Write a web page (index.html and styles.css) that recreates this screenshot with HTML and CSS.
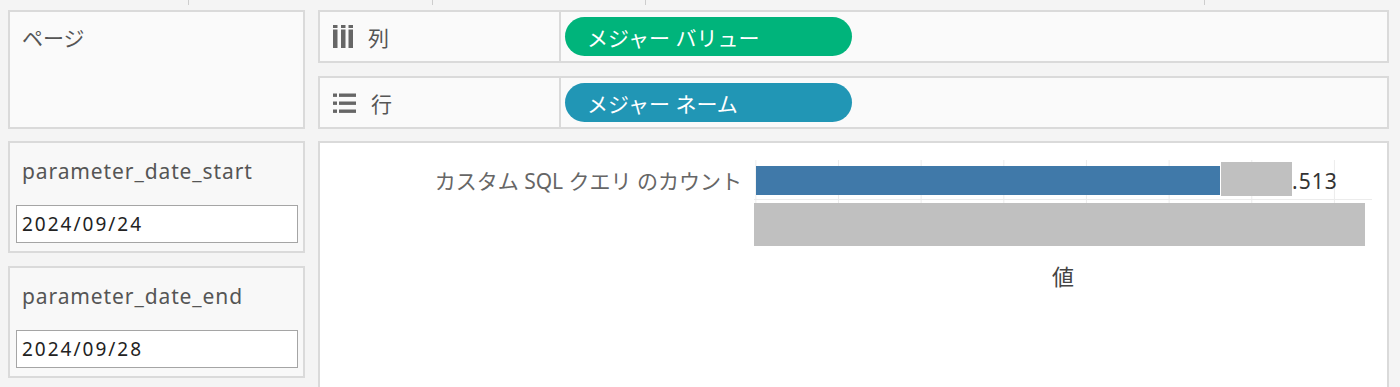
FILE: index.html
```html
<!DOCTYPE html>
<html lang="ja">
<head>
    <meta charset="UTF-8">
    <meta name="viewport" content="width=device-width, initial-scale=1.0">
    <title>シート</title>
    <link rel="stylesheet" href="styles.css">
</head>
<body>

<div class="ruler">
    <span></span><span></span><span></span><span></span>
</div>

<div class="workspace">
    <div class="card pages-card">ページ</div>

    <div class="shelves">
        <div class="card shelf">
            <div class="shelf-label">
                <svg class="shelf-icon" width="20" height="23" viewBox="0 0 20 23">
                    <rect x="0" y="0" width="4.5" height="3" />
                    <rect x="8" y="0" width="4.5" height="3" />
                    <rect x="15.5" y="0" width="4.5" height="3" />
                    <rect x="0" y="4.5" width="4.5" height="18.5" />
                    <rect x="8" y="4.5" width="4.5" height="18.5" />
                    <rect x="15.5" y="4.5" width="4.5" height="18.5" />
                </svg>
                <span>列</span>
            </div>
            <div class="pill pill-measure">メジャー バリュー</div>
        </div>
        <div class="card shelf">
            <div class="shelf-label">
                <svg class="shelf-icon" width="23" height="20" viewBox="0 0 23 20">
                    <rect x="0" y="0.5" width="4" height="3.4" />
                    <rect x="6" y="0.5" width="17" height="3.4" />
                    <rect x="0" y="8.5" width="4" height="3.4" />
                    <rect x="6" y="8.5" width="17" height="3.4" />
                    <rect x="0" y="16.5" width="4" height="3.4" />
                    <rect x="6" y="16.5" width="17" height="3.4" />
                </svg>
                <span>行</span>
            </div>
            <div class="pill pill-dimension">メジャー ネーム</div>
        </div>
    </div>

    <div class="params">
        <div class="card param">
            <div class="param-title">parameter_date_start</div>
            <input type="text" class="param-input" value="2024/09/24">
        </div>
        <div class="card param">
            <div class="param-title">parameter_date_end</div>
            <input type="text" class="param-input" value="2024/09/28">
        </div>
    </div>

    <div class="viz">
        <div class="row-header">カスタム SQL クエリ のカウント</div>
        <div class="pane">
            <div class="mark-row">
                <div class="bar bar-count"></div>
                <div class="bar label-mask"></div>
                <div class="bar-value">.513</div>
            </div>
            <div class="mark-row mark-row-last">
                <div class="bar bar-total"></div>
            </div>
        </div>
        <div class="axis-title">値</div>
    </div>
</div>

</body>
</html>
```

FILE: styles.css
```css
body {
    margin: 0;
    height: 387px;
    overflow: hidden;
    background-color: #f4f4f4;
    font-family: "Noto Sans", "Noto Sans CJK JP", sans-serif;
    color: #555;
}

.ruler {
    display: grid;
    grid-template-columns: 189px 244px 213px 559px;
    height: 10px;
    align-items: start;
}

.ruler span {
    height: 5px;
    border-right: 1px solid #cdcdcd;
}

.workspace {
    display: grid;
    grid-template-columns: 297px 1071px;
    grid-template-rows: 119px 246px;
    column-gap: 13px;
    row-gap: 12px;
    padding-left: 8px;
}

.card {
    background-color: #fafafa;
    border: 2px solid #dadada;
    box-sizing: border-box;
}

.pages-card {
    padding: 12px 12px;
    font-size: 21px;
    line-height: 28px;
}

.shelves {
    display: flex;
    flex-direction: column;
    gap: 13px;
}

.shelf {
    display: flex;
    align-items: center;
    height: 53px;
}

.shelf-label {
    display: flex;
    align-items: center;
    gap: 15px;
    width: 241px;
    height: 100%;
    padding-left: 13px;
    box-sizing: border-box;
    border-right: 2px solid #dadada;
    font-size: 21px;
    color: #555;
}

.shelf-icon {
    fill: #666;
    flex-shrink: 0;
}

.pill {
    display: flex;
    align-items: center;
    margin-left: 4px;
    width: 287px;
    height: 39px;
    padding-left: 22px;
    box-sizing: border-box;
    border-radius: 20px;
    color: #fff;
    font-size: 21px;
}

.pill-measure {
    background-color: #00b47b;
}

.pill-dimension {
    background-color: #2196b5;
}

.params {
    display: flex;
    flex-direction: column;
    gap: 13px;
}

.param {
    height: 112px;
    padding: 14px 5px 0 6px;
    background-color: #f8f8f8;
}

.param-title {
    margin: 0 0 20px 6px;
    font-size: 21px;
    line-height: 28px;
    letter-spacing: 0.9px;
    color: #555;
}

.param-input {
    display: block;
    width: 100%;
    height: 38px;
    margin: 0;
    padding: 0 5px;
    box-sizing: border-box;
    border: 1px solid #a5a5a5;
    background-color: #fff;
    font-family: "Noto Sans", sans-serif;
    font-size: 19px;
    letter-spacing: 2px;
    color: #222;
    outline: none;
}

.viz {
    display: grid;
    grid-template-columns: 434px 618px;
    grid-template-rows: 86px auto;
    align-content: start;
    padding-top: 17px;
    background-color: #fff;
    border: 2px solid #dadada;
    border-bottom: none;
    box-sizing: border-box;
}

.row-header {
    align-self: start;
    height: 40px;
    padding: 2px 12px 0 0;
    box-sizing: border-box;
    text-align: right;
    font-size: 21px;
    line-height: 38px;
    color: #666;
}

.pane {
    background-image: linear-gradient(to right, #ececec 1px, transparent 1px);
    background-size: 82.67px 100%;
    background-position: 84px 0;
}

.mark-row {
    display: flex;
    align-items: flex-start;
    height: 40px;
    box-sizing: border-box;
    border-bottom: 1px solid #ececec;
}

.mark-row-last {
    height: 46px;
    padding-top: 3px;
    border-bottom: none;
}

.bar-count {
    margin: 6px 0 0 2px;
    width: 464px;
    height: 29px;
    background-color: #4079a9;
}

.label-mask {
    margin: 2px 0 0 1px;
    width: 71px;
    height: 34px;
    background-color: #c0c0c0;
}

.bar-value {
    margin-top: 4px;
    font-size: 21px;
    line-height: 34px;
    letter-spacing: 1px;
    color: #333;
}

.bar-total {
    width: 611px;
    height: 43px;
    background-color: #c0c0c0;
}

.axis-title {
    grid-column: 2;
    margin-top: 15px;
    text-align: center;
    font-size: 22px;
    line-height: 30px;
    color: #444;
}
```
